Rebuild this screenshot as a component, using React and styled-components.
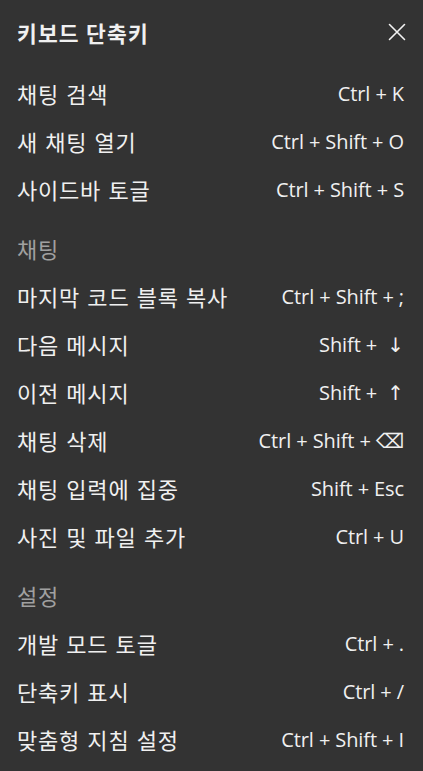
import React from 'react'
import styled, { createGlobalStyle } from 'styled-components'

const GlobalStyle = createGlobalStyle`
  html, body {
    margin: 0;
    padding: 0;
    background: #333333;
  }
`

const sections = [
  {
    title: null,
    items: [
      ['채팅 검색', 'Ctrl + K'],
      ['새 채팅 열기', 'Ctrl + Shift + O'],
      ['사이드바 토글', 'Ctrl + Shift + S'],
    ],
  },
  {
    title: '채팅',
    items: [
      ['마지막 코드 블록 복사', 'Ctrl + Shift + ;'],
      ['다음 메시지', 'Shift +  \u2193'],
      ['이전 메시지', 'Shift +  \u2191'],
      ['채팅 삭제', 'Ctrl + Shift + \u232B'],
      ['채팅 입력에 집중', 'Shift + Esc'],
      ['사진 및 파일 추가', 'Ctrl + U'],
    ],
  },
  {
    title: '설정',
    items: [
      ['개발 모드 토글', 'Ctrl + .'],
      ['단축키 표시', 'Ctrl + /'],
      ['맞춤형 지침 설정', 'Ctrl + Shift + I'],
    ],
  },
]

const CloseIcon = () => (
  <svg width='18' height='18' viewBox='0 0 18 18' fill='none'>
    <path d='M1.5 1.5 L16.5 16.5 M16.5 1.5 L1.5 16.5' stroke='#f2f2f2' strokeWidth='1.6' strokeLinecap='round' />
  </svg>
)

const ShortcutsDialog = () => (
  <Panel>
    <Header>
      <Title>키보드 단축키</Title>
      <CloseButton aria-label='닫기'>
        <CloseIcon />
      </CloseButton>
    </Header>
    {sections.map((section, i) => (
      <Section key={i}>
        {section.title && <SectionTitle>{section.title}</SectionTitle>}
        {section.items.map(([label, keys]) => (
          <Row key={label}>
            <Label>{label}</Label>
            <Keys>{keys}</Keys>
          </Row>
        ))}
      </Section>
    ))}
  </Panel>
)

const Panel = styled.div`
  box-sizing: border-box;
  width: 423px;
  min-height: 771px;
  background: #333333;
  color: #f0f0f0;
  padding: 8px 19px 0 17px;
  display: flex;
  flex-direction: column;
  font-family: 'Noto Sans', 'Noto Sans CJK KR', sans-serif;
`

const Header = styled.div`
  display: flex;
  align-items: center;
  justify-content: space-between;
  height: 48px;
  margin-bottom: 13px;
`

const Title = styled.h1`
  margin: 0;
  font-size: 21.5px;
  font-weight: 700;
  letter-spacing: 1.1px;
  word-spacing: 0.5px;
  font-family: 'Noto Sans CJK KR', sans-serif;
`

const CloseButton = styled.button`
  background: none;
  border: none;
  padding: 0;
  display: flex;
  align-items: center;
  margin-right: -2px;
  cursor: pointer;
`

const Section = styled.div`
  display: flex;
  flex-direction: column;
  & + & {
    margin-top: 11px;
  }
`

const SectionTitle = styled.div`
  height: 48px;
  display: flex;
  align-items: center;
  font-family: 'Noto Sans CJK KR', sans-serif;
  font-size: 22px;
  letter-spacing: 0.8px;
  color: #a0a0a0;
`

const Row = styled.div`
  height: 48px;
  display: flex;
  align-items: center;
  justify-content: space-between;
`

const Label = styled.span`
  font-family: 'Noto Sans CJK KR', sans-serif;
  font-size: 22px;
  letter-spacing: 0.8px;
  word-spacing: 1.5px;
`

const Keys = styled.span`
  font-family: 'Open Sans', 'Noto Sans', 'DejaVu Sans', sans-serif;
  font-size: 20px;
  letter-spacing: -0.1px;
  white-space: pre;
`

const App = () => (
  <>
    <GlobalStyle />
    <ShortcutsDialog />
  </>
)

export default App
